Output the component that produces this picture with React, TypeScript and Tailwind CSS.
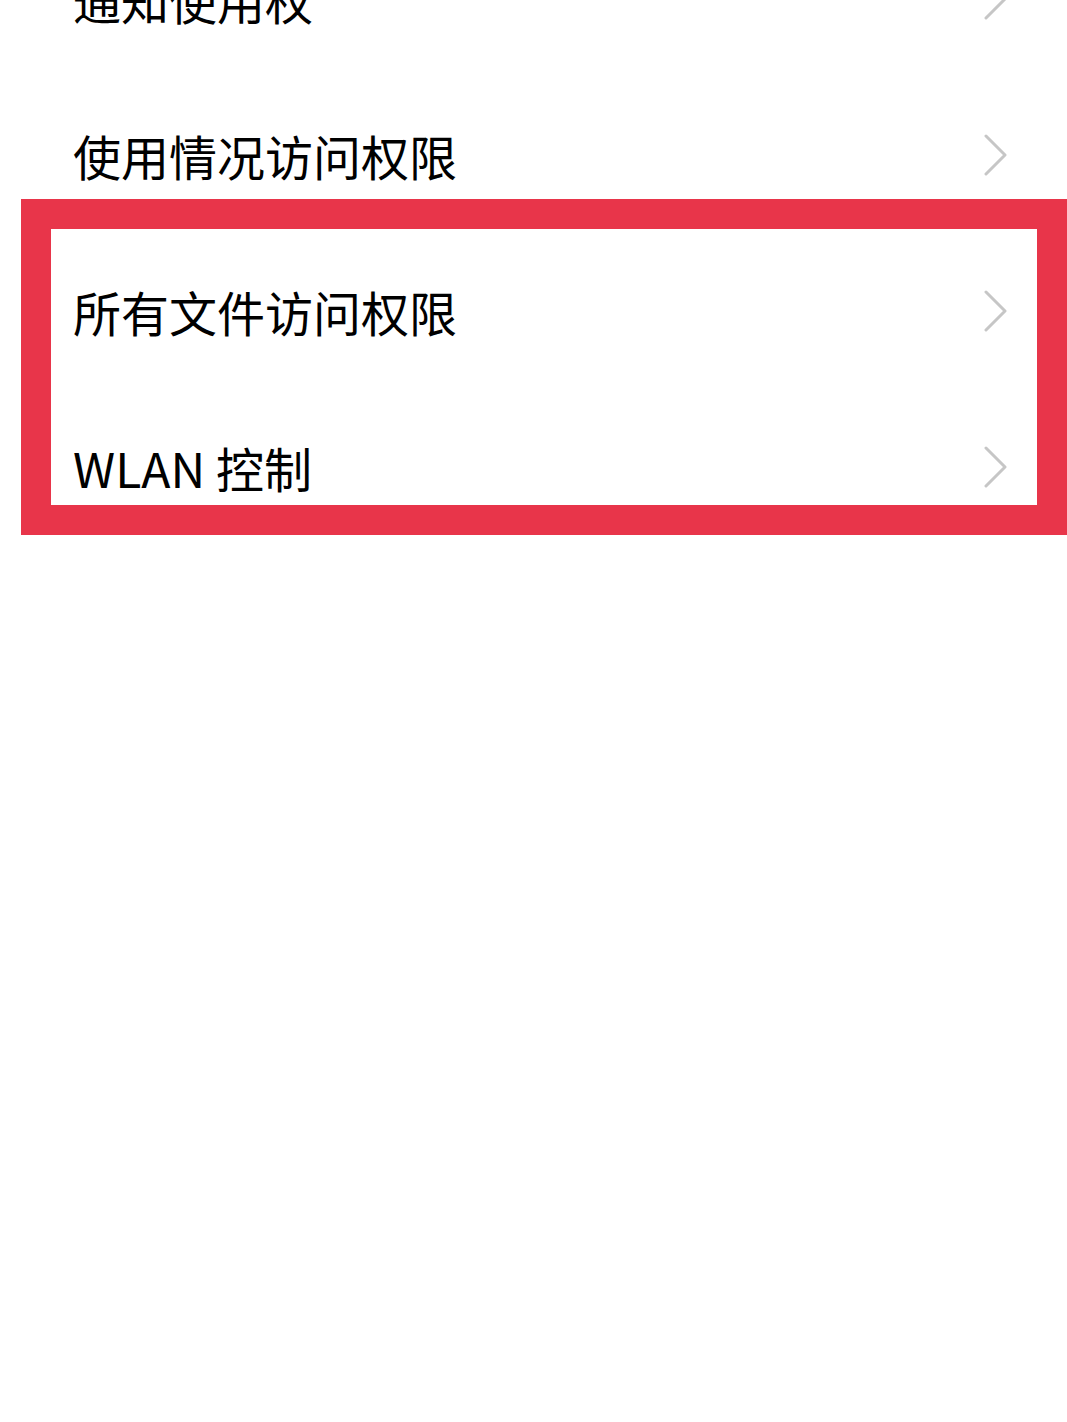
import { useState } from 'react';

const rows = ['通知使用权', '使用情况访问权限', '所有文件访问权限', 'WLAN 控制'];

function Chevron() {
  return (
    <svg width="26" height="42" viewBox="0 0 26 42" fill="none" className="shrink-0">
      <path d="M3 2 L22 21 L3 40" stroke="#c6c6c6" strokeWidth="3" strokeLinecap="round" strokeLinejoin="round" />
    </svg>
  );
}

export default function App() {
  const [active] = useState(2);

  return (
    <div className="relative w-[1067px] h-[1422px] overflow-hidden bg-white" style={{ fontFamily: '"Noto Sans CJK SC", "Noto Sans", sans-serif' }}>
      <div className="-mt-[79px] flex flex-col">
        {rows.map((label, idx) => (
          <div key={idx} className="flex h-[156px] items-center justify-between pl-[73px] pr-[58px]">
            <span className={`text-[48px] leading-none text-black ${idx === active ? '' : ''}`}>{label}</span>
            <Chevron />
          </div>
        ))}
      </div>

      {/* highlight box */}
      <div className="absolute left-[21px] top-[199px] h-[336px] w-[1046px] border-[30px] border-[#e8354a]" />
    </div>
  );
}
